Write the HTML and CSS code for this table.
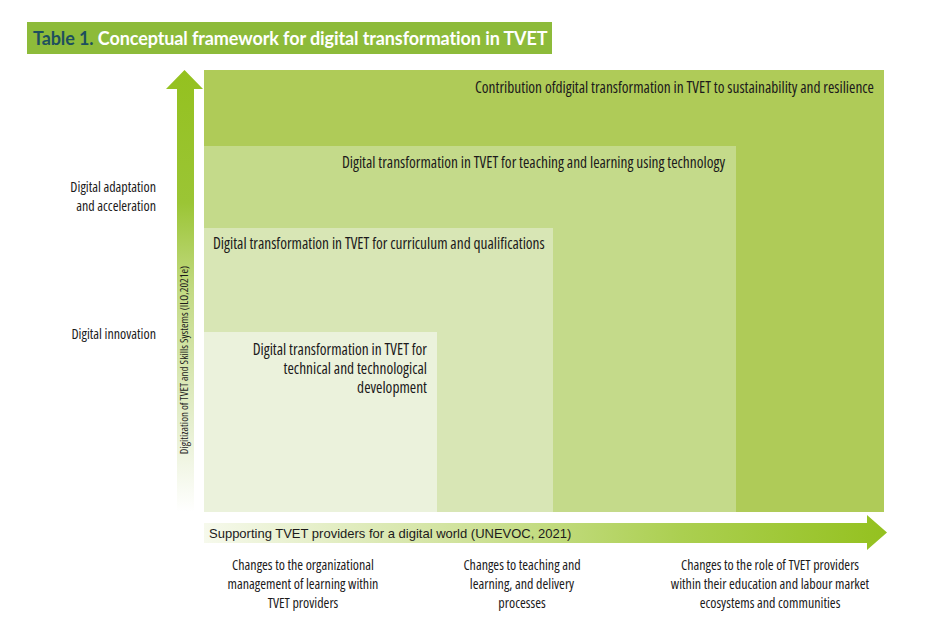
FILE: index.html
```html
<!DOCTYPE html>
<html lang="en">
<head>
<meta charset="utf-8">
<title>Table 1. Conceptual framework for digital transformation in TVET</title>
<link rel="stylesheet" href="styles.css">
</head>
<body>
<div class="page">
  <div class="title"><span class="num">Table 1.</span> Conceptual framework for digital transformation in TVET</div>
  <div class="figure">
    <div class="levels">
      <div class="level l1">Digital adaptation<br>and acceleration</div>
      <div class="level l2">Digital innovation</div>
    </div>
    <div class="varrow">
      <svg width="38" height="442" viewBox="0 0 38 442">
        <defs>
          <linearGradient id="vg" x1="0" y1="0" x2="0" y2="1">
            <stop offset="0" stop-color="#94c11f"/>
            <stop offset="0.3" stop-color="#9bc535"/>
            <stop offset="0.5" stop-color="#c3da84"/>
            <stop offset="0.8" stop-color="#e6efcf"/>
            <stop offset="1" stop-color="#ffffff"/>
          </linearGradient>
        </defs>
        <polygon points="18.5,0 37,19 28,19 28,442 11,442 11,19 0,19" fill="url(#vg)"/>
        <text class="vtext" transform="translate(21.5,290) rotate(-90)" text-anchor="middle">Digitization of TVET and Skills Systems (ILO,2021e)</text>
      </svg>
    </div>
    <div class="box b1">
      <div class="hd hd1">Contribution ofdigital transformation in TVET to sustainability and resilience</div>
      <div class="box b2">
        <div class="hd hd2">Digital transformation in TVET for teaching and learning using technology</div>
        <div class="box b3">
          <div class="hd hd3">Digital transformation in TVET for curriculum and qualifications</div>
          <div class="box b4">
            <div class="hd hd4">Digital transformation in TVET for<br>technical and technological<br>development</div>
          </div>
        </div>
      </div>
    </div>
    <div class="harrow">
      <svg width="690" height="39" viewBox="0 0 690 39">
        <defs>
          <linearGradient id="hg" x1="0" y1="0" x2="1" y2="0">
            <stop offset="0" stop-color="#f6f9ec"/>
            <stop offset="0.35" stop-color="#d3e4a2"/>
            <stop offset="0.7" stop-color="#abcf50"/>
            <stop offset="1" stop-color="#94c11f"/>
          </linearGradient>
        </defs>
        <polygon points="0,11 663,11 663,3 683,20.5 663,38 663,31 0,31" fill="url(#hg)"/>
        <text class="htext" x="5" y="25.5">Supporting TVET providers for a digital world (UNEVOC, 2021)</text>
      </svg>
    </div>
    <div class="changes">
      <div class="change c1">Changes to the organizational<br>management of learning within<br>TVET providers</div>
      <div class="change c2">Changes to teaching and<br>learning, and delivery<br>processes</div>
      <div class="change c3">Changes to the role of TVET providers<br>within their education and labour market<br>ecosystems and communities</div>
    </div>
  </div>
</div>
</body>
</html>
```

FILE: styles.css
```css
html, body {
  margin: 0;
  padding: 0;
  background: #ffffff;
}

body {
  font-family: "Open Sans", "DejaVu Sans Condensed", sans-serif;
  font-stretch: 75%;
  color: #1c1a1b;
  font-size: 14px;
}

.page {
  width: 943px;
  height: 627px;
  box-sizing: border-box;
  padding: 22px 0 0 27px;
}

.title {
  width: 525px;
  height: 32px;
  box-sizing: border-box;
  padding-left: 6px;
  background: #8dbb3a;
  color: #ffffff;
  font-family: Lato, "Open Sans", sans-serif;
  font-stretch: normal;
  font-weight: bold;
  font-size: 18px;
  letter-spacing: -0.1px;
  line-height: 32px;
  white-space: nowrap;
}

.title .num {
  color: #1d4f5e;
}

.figure {
  display: grid;
  grid-template-columns: 139px 38px 680px 20px;
  grid-template-rows: 442px 39px auto;
  margin-top: 16px;
}

.levels {
  grid-column: 1;
  grid-row: 1;
  display: flex;
  flex-direction: column;
  align-items: flex-end;
  padding-right: 10px;
  padding-top: 107px;
  line-height: 19px;
  text-align: right;
}

.level.l2 {
  margin-top: 109px;
}

.varrow {
  grid-column: 2;
  grid-row: 1;
}

.varrow svg,
.harrow svg {
  display: block;
}

.vtext {
  font-family: "Open Sans", "DejaVu Sans Condensed", sans-serif;
  font-stretch: 75%;
  font-size: 11px;
  fill: #1c1a1b;
}

.box {
  display: flex;
  flex-direction: column;
  box-sizing: border-box;
}

.b1 {
  grid-column: 3;
  grid-row: 1;
  background: #afcb58;
  height: 442px;
}

.b2 {
  background: #c4da8a;
  width: 532px;
  flex: 1;
}

.b3 {
  background: #d8e6b5;
  width: 349px;
  flex: 1;
}

.b4 {
  background: #ebf2dc;
  width: 233px;
  flex: 1;
}

.hd {
  box-sizing: border-box;
  font-size: 15.4px;
  font-weight: 500;
  font-stretch: 75%;
  line-height: 19px;
  white-space: nowrap;
}

.hd1 {
  height: 76px;
  padding: 8px 10px 0 0;
  text-align: right;
}

.hd2 {
  height: 82px;
  padding: 7px 11px 0 0;
  text-align: right;
}

.hd3 {
  height: 104px;
  padding: 6px 0 0 9px;
  text-align: left;
}

.hd4 {
  padding: 8px 10px 0 0;
  text-align: right;
}

.harrow {
  grid-column: 3 / 5;
  grid-row: 2;
}

.htext {
  font-family: "Liberation Sans", Arial, sans-serif;
  font-stretch: normal;
  font-size: 13px;
  fill: #1c1a1b;
}

.changes {
  grid-column: 3 / 5;
  grid-row: 3;
  display: grid;
  grid-template-columns: 198px 240px 256px;
  padding-top: 4px;
  line-height: 19px;
  text-align: center;
}

.change {
  white-space: nowrap;
}
```
